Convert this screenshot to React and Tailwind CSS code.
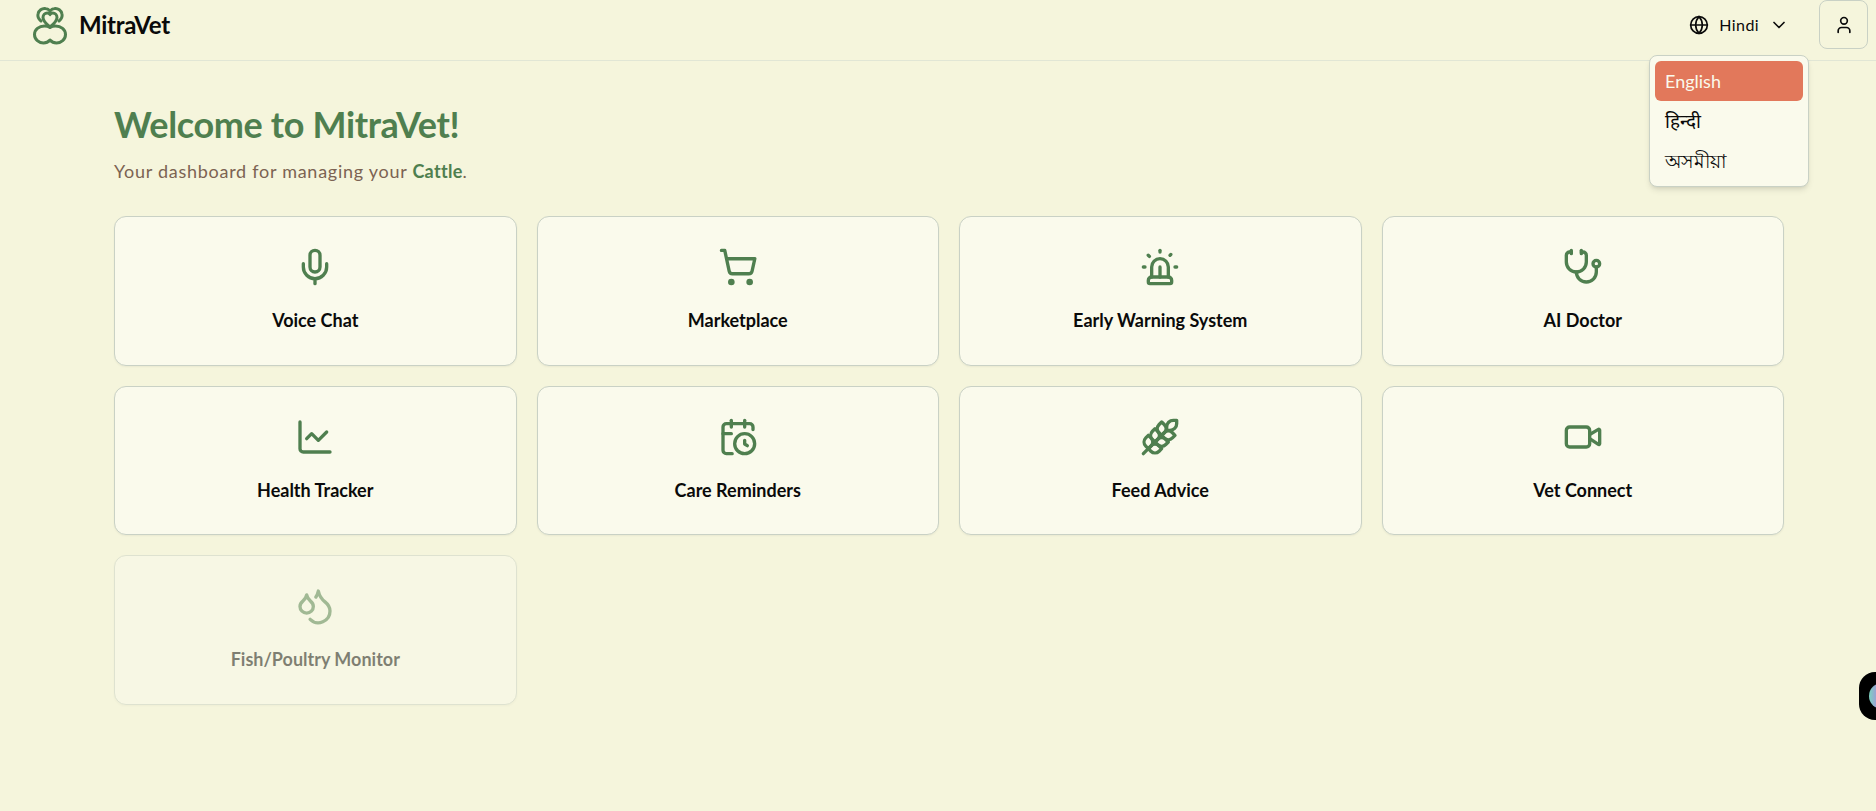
import { CalendarClock, ChartLine, ChevronDown, Droplets, Globe, Mic, ShoppingCart, Siren, Stethoscope, User, Video, Wheat } from "lucide-react";

const features = [
    { label: "Voice Chat", icon: Mic },
    { label: "Marketplace", icon: ShoppingCart },
    { label: "Early Warning System", icon: Siren },
    { label: "AI Doctor", icon: Stethoscope },
    { label: "Health Tracker", icon: ChartLine },
    { label: "Care Reminders", icon: CalendarClock },
    { label: "Feed Advice", icon: Wheat },
    { label: "Vet Connect", icon: Video },
    { label: "Fish/Poultry Monitor", icon: Droplets, disabled: true },
];

function Logo() {
    return (
        <svg viewBox="0 0 36 40" className="h-[40px] w-[36px]" fill="none" stroke="#4f7f4f" strokeWidth="3" strokeLinecap="round" strokeLinejoin="round">
            {/* heart */}
            <path d="M18 22c-3-2.500-7-5.500-7-9.500 0-2.500 2-4.500 4.200-4.500 1.200 0 2.200.6 2.800 1.600.6-1 1.600-1.600 2.800-1.600 2.200 0 4.200 2 4.200 4.500 0 4-4 7-7 9.500z" />
            {/* ears */}
            <path d="M9 16c-2.500-2-3.500-4.500-3-7 .6-3.500 4-6 7.500-5.500 1.800.2 3.400 1.200 4.500 2.500 1.100-1.300 2.700-2.300 4.500-2.500 3.500-.5 6.900 2 7.500 5.500.5 2.500-.5 5-3 7" />
            {/* bottom */}
            <path d="M18 22.500c-1.500-1-3.500-1.500-5.500-1.500-5.500 0-10 3.500-10 8.500s4.500 8.500 9 8.500c2.700 0 4.800-1 6.500-3 1.700 2 3.800 3 6.500 3 4.500 0 9-3.500 9-8.500s-4.500-8.500-10-8.500c-2 0-4 .5-5.500 1.500z" />
        </svg>
    );
}

function FeatureCard({ label, icon: Icon, disabled }) {
    return (
        <div className={`flex h-[149.5px] flex-col items-center justify-center gap-[19px] rounded-xl border border-[#c9d1c5] bg-[#fafaec] shadow-xs ${disabled ? "opacity-50" : ""}`}>
            <Icon className="h-10 w-10 text-[#4f7f4f]" strokeWidth={2} />
            <span className="text-lg leading-7 font-bold text-[#0a0a0a]">{label}</span>
        </div>
    );
}

export default function App() {
    return (
        <div className="relative h-[811px] overflow-hidden bg-[#f5f5dc] font-['Lato','Noto_Sans',sans-serif]">
            {/* Header */}
            <header className="flex h-[61px] items-start justify-between border-b border-[#e1e6d5] pr-2 pl-8">
                <div className="flex h-[50px] items-center gap-[11px]">
                    <Logo />
                    <span className="text-2xl font-bold tracking-[-0.3px] text-[#0a0a0a]">MitraVet</span>
                </div>
                <div className="flex items-center gap-[18px]">
                    <button className="flex h-[49px] items-center gap-[10px] px-3 text-base tracking-[0.4px] text-[#0a0a0a]">
                        <Globe className="h-5 w-5" />
                        <span>Hindi</span>
                        <ChevronDown className="h-5 w-5" />
                    </button>
                    <button className="flex h-[49px] w-[49px] items-center justify-center rounded-lg border border-[#c9d1c5] bg-[#f5f5dc] text-[#0a0a0a]">
                        <User className="h-5 w-5" />
                    </button>
                </div>
            </header>

            {/* Main */}
            <main className="pt-[43px] pr-[92px] pl-[114px]">
                <h1 className="text-4xl leading-10 font-bold tracking-[-0.35px] text-[#4f7f4f]">Welcome to MitraVet!</h1>
                <p className="mt-[13px] text-lg leading-7 tracking-[0.73px] text-[#7c6352]">
                    Your dashboard for managing your <span className="font-bold tracking-[0.3px] text-[#4f7f4f]">Cattle</span>.
                </p>
                <div className="mt-[31px] grid grid-cols-4 gap-5">
                    {features.map((f) => (
                        <FeatureCard key={f.label} {...f} />
                    ))}
                </div>
            </main>

            {/* Language menu */}
            <div className="absolute top-[55px] left-[1649px] w-[160px] rounded-lg border border-[#c9d1c5] bg-[#fafaec] p-[5px] text-lg shadow-md">
                <div className="flex h-[40px] items-center rounded-md bg-[#e2785b] px-[10px] text-[#fafaec]">English</div>
                <div className="flex h-[40px] items-center px-[10px] text-[19px] text-[#0a0a0a]">हिन्दी</div>
                <div className="flex h-[40px] items-center px-[10px] text-[19px] text-[#0a0a0a]">অসমীয়া</div>
            </div>

            {/* Floating chat button */}
            <div className="absolute top-[672px] left-[1859px] flex h-[48px] w-[60px] items-center rounded-[16px] bg-black pl-[10px]">
                <div className="h-[26px] w-[26px] rounded-full bg-[linear-gradient(90deg,#7dd3c0_0%,#a78bdb_40%,#b060e0_100%)]" />
            </div>
        </div>
    );
}
